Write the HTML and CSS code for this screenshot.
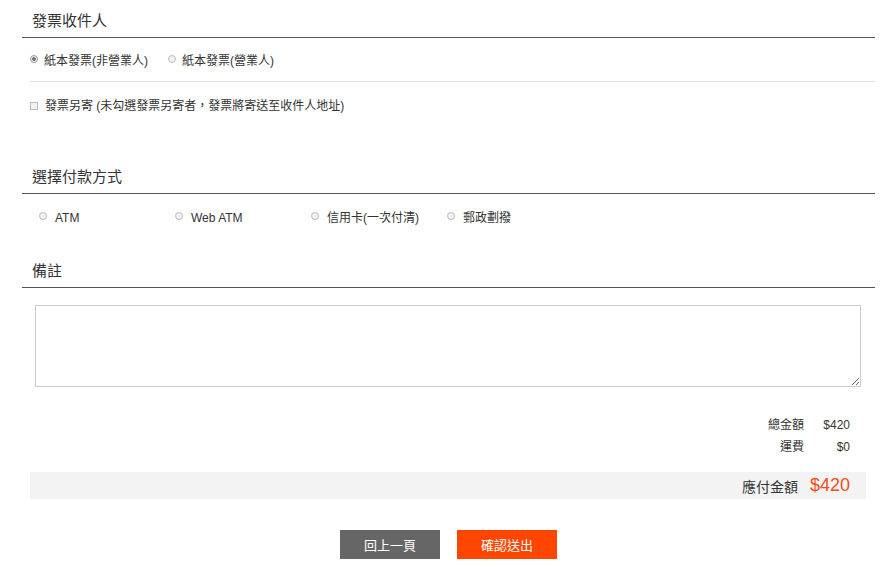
FILE: index.html
```html
<!DOCTYPE html>
<html lang="zh-Hant">
<head>
    <meta charset="UTF-8">
    <title>發票收件人</title>
    <link rel="stylesheet" href="styles.css">
</head>
<body>
    <div class="page">

        <div class="section">
            <h3 class="sec-title">發票收件人</h3>
            <div class="opt-row invoice-type">
                <label class="opt"><span class="radio checked"></span>紙本發票(非營業人)</label>
                <label class="opt"><span class="radio"></span>紙本發票(營業人)</label>
            </div>
            <div class="opt-row mail-row">
                <label class="opt"><span class="check"></span>發票另寄 (未勾選發票另寄者，發票將寄送至收件人地址)</label>
            </div>
        </div>

        <div class="section pay">
            <h3 class="sec-title">選擇付款方式</h3>
            <div class="pay-list">
                <label class="opt pay-item"><span class="radio"></span>ATM</label>
                <label class="opt pay-item"><span class="radio"></span>Web ATM</label>
                <label class="opt pay-item"><span class="radio"></span>信用卡(一次付清)</label>
                <label class="opt pay-item"><span class="radio"></span>郵政劃撥</label>
            </div>
        </div>

        <div class="section note">
            <h3 class="sec-title">備註</h3>
            <textarea class="note-box"></textarea>
        </div>

        <div class="sum">
            <div class="sum-row"><span class="sum-label">總金額</span><span class="sum-val">$420</span></div>
            <div class="sum-row"><span class="sum-label">運費</span><span class="sum-val">$0</span></div>
        </div>

        <div class="total-bar">
            <span class="total-label">應付金額</span>
            <span class="total-val">$420</span>
        </div>

        <div class="actions">
            <button class="btn btn-back">回上一頁</button>
            <button class="btn btn-ok">確認送出</button>
        </div>

    </div>
</body>
</html>
```

FILE: styles.css
```css
body {
    margin: 0;
    font-family: "Liberation Sans", "Noto Sans CJK TC", sans-serif;
    color: #333;
    background: #fff;
}
.page {
    padding: 0 6px 0 22px;
}
.sec-title {
    margin: 0;
    font-size: 15px;
    font-weight: normal;
    color: #333;
    padding: 10px 0 0 10px;
    height: 27px;
    line-height: 22px;
    border-bottom: 1px solid #555;
}
.opt {
    display: flex;
    align-items: center;
    font-size: 12px;
    color: #333;
    line-height: 16px;
}
.radio {
    width: 6px;
    height: 6px;
    border: 1px solid #bbb;
    border-radius: 50%;
    background: #f2f2f2;
    margin-right: 6px;
    margin-top: -4px;
    box-sizing: content-box;
}
.radio.checked {
    background: radial-gradient(circle, #777 0 1.6px, #f2f2f2 2.2px);
    border-color: #999;
}
.check {
    width: 6px;
    height: 6px;
    border: 1px solid #bbb;
    background: #f2f2f2;
    margin-right: 7px;
}
.opt-row {
    display: flex;
    gap: 20px;
    margin-left: 8px;
}
.invoice-type {
    padding: 15px 0 12px;
    border-bottom: 1px solid #ddd;
}
.mail-row {
    padding-top: 16px;
}
.pay {
    margin-top: 42px;
}
.pay-list {
    display: grid;
    grid-template-columns: repeat(4, 136px);
    padding: 16px 0 0 17px;
}
.pay-item .radio {
    margin-right: 8px;
}
.note {
    margin-top: 24px;
}
.note-box {
    display: block;
    margin: 17px 0 0 13px;
    width: 826px;
    height: 82px;
    box-sizing: border-box;
    border: 1px solid #ccc;
    resize: vertical;
}
.sum {
    margin-top: 27px;
    padding-right: 25px;
    font-size: 12px;
}
.sum-row {
    display: flex;
    justify-content: flex-end;
    line-height: 22px;
}
.sum-label {
    text-align: right;
}
.sum-val {
    width: 46px;
    text-align: right;
}
.total-bar {
    margin: 14px 9px 0 8px;
    height: 27px;
    background: #f3f3f3;
    display: flex;
    justify-content: flex-end;
    align-items: center;
    padding-right: 16px;
}
.total-label {
    font-size: 14px;
    color: #333;
    margin-right: 12px;
}
.total-val {
    font-size: 18px;
    color: #f04e1c;
}
.actions {
    display: flex;
    justify-content: center;
    gap: 17px;
    margin-top: 31px;
}
.btn {
    width: 100px;
    height: 29px;
    border: none;
    color: #fff;
    font-size: 13px;
    font-family: "Liberation Sans", "Noto Sans CJK TC", sans-serif;
}
.btn-back {
    background: #666;
}
.btn-ok {
    background: #ff4600;
}
```
